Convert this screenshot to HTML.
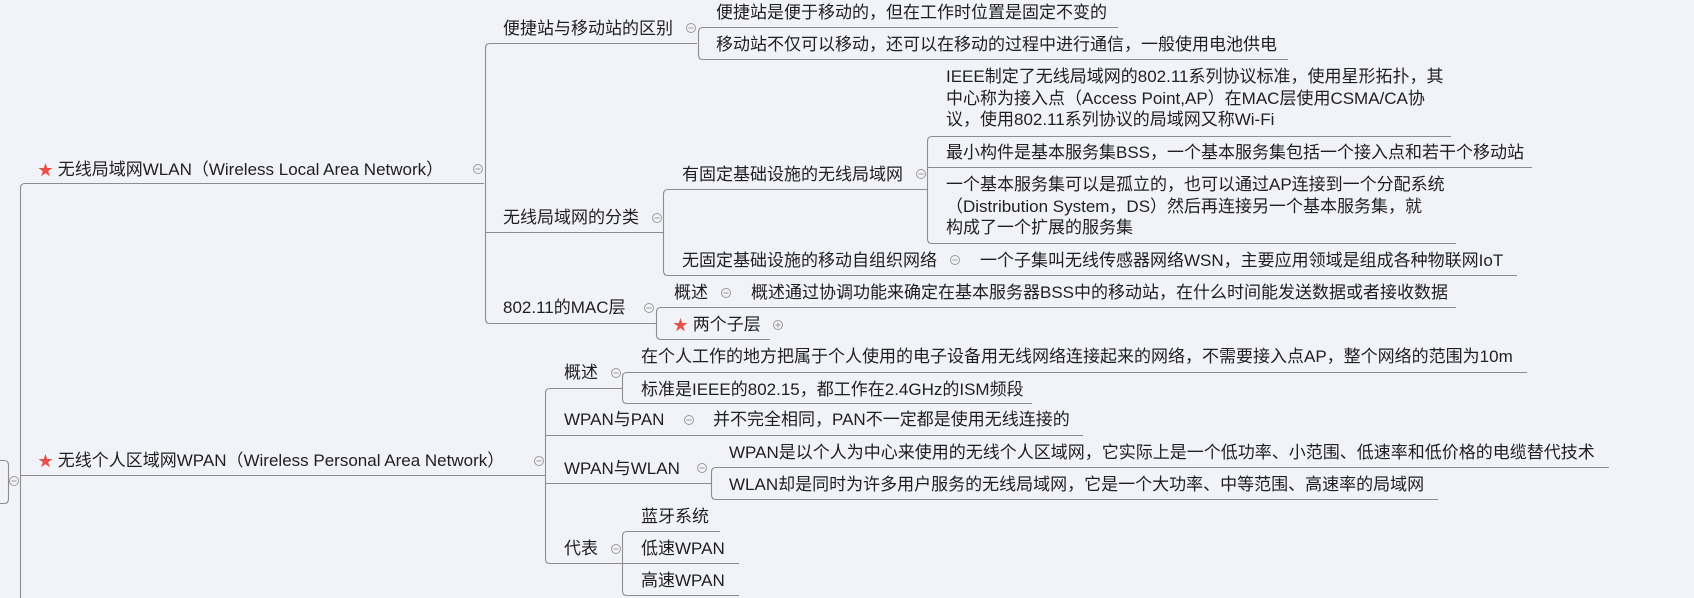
<!DOCTYPE html>
<html><head><meta charset="utf-8">
<style>
html,body{margin:0;padding:0;}
body{width:1694px;height:598px;background:#f2f3f8;position:relative;overflow:hidden;font-family:"Liberation Sans","Noto Sans CJK SC",sans-serif;color:#1f1f1f;font-size:17px;}
.t{position:absolute;white-space:nowrap;line-height:22px;height:22px;}
.m{position:absolute;white-space:nowrap;line-height:21.5px;}
svg{position:absolute;left:0;top:0;}
.star{color:#e8504a;font-size:15px;}
</style></head><body>
<svg width="1694" height="598" viewBox="0 0 1694 598">
<g fill="none" stroke="#8d8d8d" stroke-width="1.1">
<path d="M484 183.5 H25 Q20.5 183.5 20.5 188 V598"/>
<path d="M20.5 475.5 H545"/>
<path d="M0 460.5 H4 Q8.5 460.5 8.5 465 V499 Q8.5 503.5 4 503.5 H0"/>
<path d="M697 43.5 H490 Q485.5 43.5 485.5 48 V319 Q485.5 323.5 490 323.5 H656"/>
<path d="M485.5 232.5 H663"/>
<path d="M1118 27.5 H703 Q698.5 27.5 698.5 32 V55 Q698.5 59.5 703 59.5 H1288"/>
<path d="M927 189.5 H668 Q663.5 189.5 663.5 194 V271 Q663.5 275.5 668 275.5 H1517"/>
<path d="M1451 136.5 H932 Q927.5 136.5 927.5 141 V239 Q927.5 243.5 932 243.5 H1456"/>
<path d="M927.5 167.5 H1532"/>
<path d="M1456 307.5 H661 Q656.5 307.5 656.5 312 V335 Q656.5 339.5 661 339.5 H770"/>
<path d="M622 388.5 H550 Q545.5 388.5 545.5 393 V559 Q545.5 563.5 550 563.5 H622"/>
<path d="M545.5 435.5 H1083"/>
<path d="M545.5 483.5 H711"/>
<path d="M1527 372.5 H627 Q622.5 372.5 622.5 377 V399 Q622.5 403.5 627 403.5 H1032"/>
<path d="M1609 467.5 H716 Q711.5 467.5 711.5 472 V495 Q711.5 499.5 716 499.5 H1438"/>
<path d="M720 531.5 H627 Q622.5 531.5 622.5 536 V591 Q622.5 595.5 627 595.5 H739"/>
<path d="M622.5 563.5 H739"/>
</g>
<g fill="none" stroke="#9a9a9a" stroke-width="1">
<circle cx="478" cy="169" r="4.5"/><path d="M475.5 169 H480.5"/>
<circle cx="691" cy="28" r="4.5"/><path d="M688.5 28 H693.5"/>
<circle cx="657" cy="218" r="4.5"/><path d="M654.5 218 H659.5"/>
<circle cx="921" cy="174" r="4.5"/><path d="M918.5 174 H923.5"/>
<circle cx="955" cy="260" r="4.5"/><path d="M952.5 260 H957.5"/>
<circle cx="649" cy="308" r="4.5"/><path d="M646.5 308 H651.5"/>
<circle cx="726" cy="293" r="4.5"/><path d="M723.5 293 H728.5"/>
<circle cx="778" cy="325" r="4.5"/><path d="M775.5 325 H780.5 M778 322.5 V327.5"/>
<circle cx="539" cy="461" r="4.5"/><path d="M536.5 461 H541.5"/>
<circle cx="616" cy="373" r="4.5"/><path d="M613.5 373 H618.5"/>
<circle cx="689" cy="420" r="4.5"/><path d="M686.5 420 H691.5"/>
<circle cx="702" cy="468" r="4.5"/><path d="M699.5 468 H704.5"/>
<circle cx="616" cy="549" r="4.5"/><path d="M613.5 549 H618.5"/>
<circle cx="14" cy="481" r="4.5"/><path d="M11.5 481 H16.5"/>
</g>
</svg>

<div class="t" style="left:38px;top:159px;"><span class="star">★</span> 无线局域网WLAN（Wireless Local Area Network）</div>
<div class="t" style="left:503px;top:18px;">便捷站与移动站的区别</div>
<div class="t" style="left:716px;top:2px;">便捷站是便于移动的，但在工作时位置是固定不变的</div>
<div class="t" style="left:716px;top:34px;">移动站不仅可以移动，还可以在移动的过程中进行通信，一般使用电池供电</div>
<div class="t" style="left:503px;top:207px;">无线局域网的分类</div>
<div class="t" style="left:682px;top:164px;">有固定基础设施的无线局域网</div>
<div class="m" style="left:946px;top:66px;">IEEE制定了无线局域网的802.11系列协议标准，使用星形拓扑，其<br>中心称为接入点（Access Point,AP）在MAC层使用CSMA/CA协<br>议，使用802.11系列协议的局域网又称Wi-Fi</div>
<div class="t" style="left:946px;top:142px;">最小构件是基本服务集BSS，一个基本服务集包括一个接入点和若干个移动站</div>
<div class="m" style="left:946px;top:174px;">一个基本服务集可以是孤立的，也可以通过AP连接到一个分配系统<br>（Distribution System，DS）然后再连接另一个基本服务集，就<br>构成了一个扩展的服务集</div>
<div class="t" style="left:682px;top:250px;">无固定基础设施的移动自组织网络</div>
<div class="t" style="left:980px;top:250px;">一个子集叫无线传感器网络WSN，主要应用领域是组成各种物联网IoT</div>
<div class="t" style="left:503px;top:297px;">802.11的MAC层</div>
<div class="t" style="left:674px;top:282px;">概述</div>
<div class="t" style="left:751px;top:282px;">概述通过协调功能来确定在基本服务器BSS中的移动站，在什么时间能发送数据或者接收数据</div>
<div class="t" style="left:673px;top:314px;"><span class="star">★</span> 两个子层</div>

<div class="t" style="left:38px;top:450px;"><span class="star">★</span> 无线个人区域网WPAN（Wireless Personal Area Network）</div>
<div class="t" style="left:564px;top:362px;">概述</div>
<div class="t" style="left:641px;top:346px;">在个人工作的地方把属于个人使用的电子设备用无线网络连接起来的网络，不需要接入点AP，整个网络的范围为10m</div>
<div class="t" style="left:641px;top:379px;">标准是IEEE的802.15，都工作在2.4GHz的ISM频段</div>
<div class="t" style="left:564px;top:409px;">WPAN与PAN</div>
<div class="t" style="left:713px;top:409px;">并不完全相同，PAN不一定都是使用无线连接的</div>
<div class="t" style="left:564px;top:458px;">WPAN与WLAN</div>
<div class="t" style="left:729px;top:442px;">WPAN是以个人为中心来使用的无线个人区域网，它实际上是一个低功率、小范围、低速率和低价格的电缆替代技术</div>
<div class="t" style="left:729px;top:474px;">WLAN却是同时为许多用户服务的无线局域网，它是一个大功率、中等范围、高速率的局域网</div>
<div class="t" style="left:564px;top:538px;">代表</div>
<div class="t" style="left:641px;top:506px;">蓝牙系统</div>
<div class="t" style="left:641px;top:538px;">低速WPAN</div>
<div class="t" style="left:641px;top:570px;">高速WPAN</div>
</body></html>
